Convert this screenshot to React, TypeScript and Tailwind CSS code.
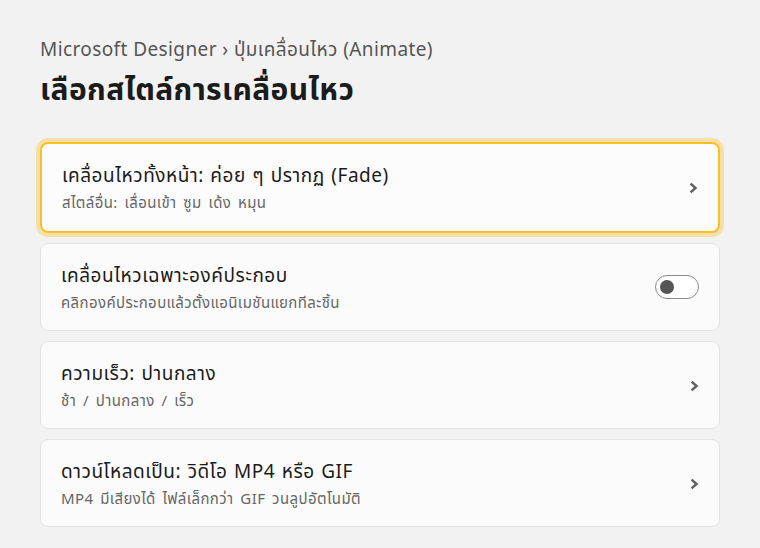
import { Fragment } from "react";

type Row = {
  title: string;
  sub: string;
  kind: "chevron" | "toggle";
  active?: boolean;
};

const rows: Row[] = [
  {
    title: "เคลื่อนไหวทั้งหน้า: ค่อย ๆ ปรากฏ (Fade)",
    sub: "สไตล์อื่น: เลื่อนเข้า ซูม เด้ง หมุน",
    kind: "chevron",
    active: true,
  },
  {
    title: "เคลื่อนไหวเฉพาะองค์ประกอบ",
    sub: "คลิกองค์ประกอบแล้วตั้งแอนิเมชันแยกทีละชิ้น",
    kind: "toggle",
  },
  {
    title: "ความเร็ว: ปานกลาง",
    sub: "ช้า / ปานกลาง / เร็ว",
    kind: "chevron",
  },
  {
    title: "ดาวน์โหลดเป็น: วิดีโอ MP4 หรือ GIF",
    sub: "MP4 มีเสียงได้ ไฟล์เล็กกว่า GIF วนลูปอัตโนมัติ",
    kind: "chevron",
  },
];

function Chevron() {
  return (
    <svg width="10" height="12" viewBox="0 0 10 12" className="mt-[1px] shrink-0">
      <path d="M3.5 2.5 L7.5 6 L3.5 9.5" fill="none" stroke="#5f5f5f" strokeWidth="2.4" strokeLinecap="square" />
    </svg>
  );
}

function Toggle() {
  return (
    <div className="flex h-[24px] w-[44px] shrink-0 items-center rounded-full border border-[#8a8a8a] bg-white px-[4px]">
      <div className="h-[14px] w-[14px] rounded-full bg-[#555555]" />
    </div>
  );
}

export default function App() {
  return (
    <div
      className="min-h-[548px] w-full bg-[#f2f2f2] px-[40px] pt-[38px]"
      style={{ fontFamily: '"Noto Sans Thai", "Noto Sans Thai UI", "Noto Sans", sans-serif' }}
    >
      <div className="text-[19px] leading-[26px] tracking-[0.4px] text-[#555555]">
        Microsoft Designer › ปุ่มเคลื่อนไหว (Animate)
      </div>
      <h1 className="mt-[8px] text-[30px] font-bold leading-[38px] tracking-[0.4px] text-[#1b1b1b]">
        เลือกสไตล์การเคลื่อนไหว
      </h1>

      <div className="mt-[32px] flex flex-col gap-[10px]">
        {rows.map((r, i) => (
          <Fragment key={i}>
            <div
              className={
                r.active
                  ? "flex h-[91px] items-center justify-between rounded-[8px] border-2 border-[#fbbf24] bg-[#fcfcfc] pl-[20px] pr-[20px] shadow-[0_0_0_4px_rgba(251,191,36,0.35)]"
                  : "flex h-[88px] items-center justify-between rounded-[8px] border border-[#e3e3e3] bg-[#fbfbfb] pl-[20px] pr-[20px]"
              }
            >
              <div className="flex flex-col pt-[3px]">
                <div className="text-[19px] leading-[26px] tracking-[0.55px] text-[#1b1b1b] [word-spacing:1px]">
                  {r.title}
                </div>
                <div className="mt-[4px] text-[15px] leading-[20px] tracking-[0.4px] text-[#666666] [word-spacing:2.5px]">
                  {r.sub}
                </div>
              </div>
              {r.kind === "chevron" ? <Chevron /> : <Toggle />}
            </div>
          </Fragment>
        ))}
      </div>
    </div>
  );
}
